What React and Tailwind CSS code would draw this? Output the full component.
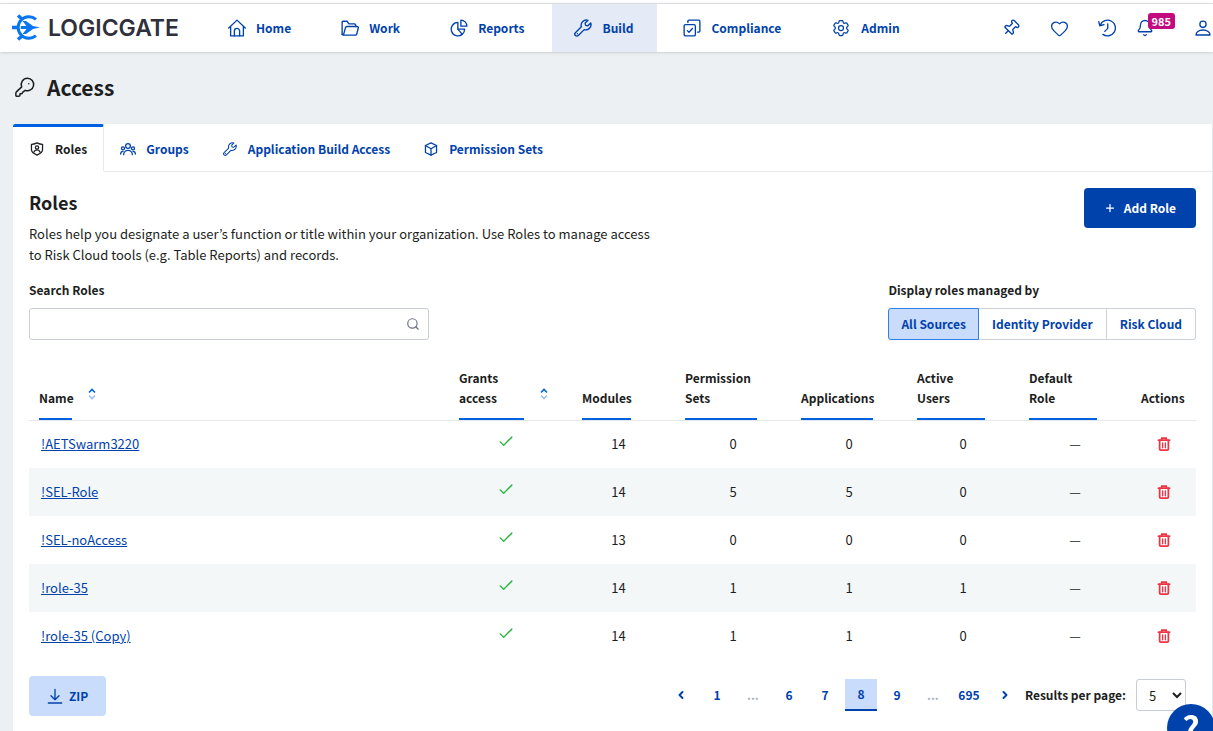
import React, { useState } from 'react';
import { Bell, Heart, Pin, Plus, Search, ChevronLeft, ChevronRight } from 'lucide-react';
import { HiOutlineCog6Tooth } from 'react-icons/hi2';

const Icon = ({ className, strokeWidth = 1.8, children }) => (
  <svg
    className={className}
    viewBox="0 0 24 24"
    fill="none"
    stroke="currentColor"
    strokeWidth={strokeWidth}
    strokeLinecap="round"
    strokeLinejoin="round"
    aria-hidden="true"
  >
    {children}
  </svg>
);

const HomeIcon = ({ className }) => (
  <Icon className={className}>
    <path d="M1 12 12 1.500 23 12M3.500 9.800V22.500H20.500V9.800" />
    <path d="M8.500 22.500V16a3.500 3.500 0 0 1 7 0v6.500" />
  </Icon>
);

const FolderIcon = ({ className }) => (
  <Icon className={className}>
    <path d="M1.500 20.500V4.500A1.500 1.500 0 0 1 3 3h5l2.500 3.500H18A1.500 1.500 0 0 1 19.500 8v2" />
    <path d="M1.500 20.500a1.500 1.500 0 0 0 1.200 1H19a2 2 0 0 0 2-1.500l2-8a1.500 1.500 0 0 0-1.500-2H8a2 2 0 0 0-2 1.500L3.500 20.500" />
  </Icon>
);

const PieIcon = ({ className }) => (
  <Icon className={className}>
    <path d="M10.500 4.500a9 9 0 1 0 5.800 16L10.500 13.500z" />
    <path d="M10.500 13.500h9a9 9 0 0 1-3.200 7" />
    <path d="M14.500 1.500v8h8a8 8 0 0 0-8-8z" />
  </Icon>
);

const WrenchIcon = ({ className }) => (
  <Icon className={className}>
    <path d="M22.300 5.200 18.500 9l-3-.6-.6-3 3.800-3.700a7 7 0 0 0-8.900 8.700L1.900 18.200a2.700 2.700 0 0 0 3.900 3.900l7.800-7.900a7 7 0 0 0 8.700-9z" />
    <path d="M4.500 19.500v.1" />
  </Icon>
);

const ComplianceIcon = ({ className }) => (
  <Icon className={className}>
    <rect x="1.500" y="7.500" width="15" height="15" rx="2" />
    <path d="M6.500 4.500V3a1.500 1.500 0 0 1 1.500-1.500h13A1.500 1.500 0 0 1 22.500 3v13a1.500 1.500 0 0 1-1.500 1.500h-1.500" />
    <path d="m5.800 15.500 2.200 2.200 4.500-5" />
  </Icon>
);

const HistoryIcon = ({ className }) => (
  <Icon className={className}>
    <path d="M6.500 20.500A10.500 10.500 0 1 0 3 8M1 3.500 2.500 9l5.500-1.500" />
    <path d="M13 6.500v6l-4 4" />
  </Icon>
);

const UserIcon = ({ className }) => (
  <Icon className={className} strokeWidth={2}>
    <circle cx="12" cy="6.500" r="4.700" />
    <path d="M1.500 22.500c0-4 4-7.500 10.500-7.500s10.500 3.500 10.500 7.500z" />
  </Icon>
);

const KeyIcon = ({ className }) => (
  <Icon className={className} strokeWidth={1.8}>
    <path d="M15 1.500a7.500 7.500 0 0 0-7 10.300L2 17.500c-.7.700-1 1.400-1 2.300V22a1 1 0 0 0 1 1h2.200c1 0 1.800-.5 1.800-1.500V20h1.500c1 0 1.500-.5 1.500-1.500L12.200 16A7.500 7.500 0 1 0 15 1.500z" />
    <path d="M16.500 8v.1" />
  </Icon>
);

const RoleIcon = ({ className }) => (
  <Icon className={className} strokeWidth={2.200}>
    <path d="M12 1.500c3 1.500 6 2.500 9.500 2.500v9c0 4.500-4.500 7.500-9.500 9.500-5-2-9.500-5-9.500-9.500V4C6 4 9 3 12 1.500z" />
    <circle cx="12" cy="9.500" r="2.800" />
    <path d="M6.500 17.500a5.800 5.800 0 0 1 11 0" />
  </Icon>
);

const GroupIcon = ({ className }) => (
  <Icon className={className} strokeWidth={2}>
    <circle cx="12" cy="7.500" r="3.500" />
    <path d="M5.500 20.500a6.500 6.500 0 0 1 13 0" />
    <circle cx="4.500" cy="11" r="2.300" />
    <circle cx="19.500" cy="11" r="2.300" />
    <path d="M1 19.500c0-2.500 1.500-4 3.500-4M23 19.500c0-2.500-1.500-4-3.500-4" />
  </Icon>
);

const BoxIcon = ({ className }) => (
  <Icon className={className} strokeWidth={2.200}>
    <path d="m12 1.500 9.500 4.500v12L12 22.500 2.500 18V6z" />
    <path d="M2.500 6 12 11.500 21.500 6M12 11.500v11" />
  </Icon>
);

const CheckIcon = ({ className }) => (
  <Icon className={className} strokeWidth={2.400}>
    <path d="m2 13.500 6 6L22 5" />
  </Icon>
);

const TrashIcon = ({ className }) => (
  <Icon className={className} strokeWidth={3}>
    <path d="M2.500 5.500h19M8 5V2h8v3" />
    <path d="M4.500 6v14.500a2 2 0 0 0 2 2h11a2 2 0 0 0 2-2V6" />
    <path d="M9.700 10v8.500M14.300 10v8.500" strokeWidth={2.200} />
  </Icon>
);

const DownloadIcon = ({ className }) => (
  <Icon className={className} strokeWidth={2}>
    <path d="M12 2v15M6 11.500l6 6 6-6M2 22.500h20" />
  </Icon>
);

const SortIcon = () => (
  <svg className="w-2 h-3 mb-5 shrink-0 text-[#0061e0]" viewBox="0 0 8 12" fill="none" stroke="currentColor" strokeWidth="1.600" aria-hidden="true">
    <path d="M1 4.500 4 1.500l3 3" />
    <path d="m1 7.500 3 3 3-3" opacity="0.400" />
  </svg>
);

const Logo = () => (
  <a href="#home" className="flex items-center gap-2 w-[195px] pl-3 shrink-0" aria-label="LogicGate">
    <svg className="size-7 shrink-0" viewBox="0 0 28 28" aria-hidden="true">
      <path d="M24 5.300A10.800 10.800 0 1 0 24 21.700" fill="none" stroke="#0a75f0" strokeWidth="3" />
      <path d="m6 1.500 4 3.500M6 25.500l4-3.500M0 13.500h5" fill="none" stroke="#0a75f0" strokeWidth="3.400" />
      <path d="M8.800 12h5.700L10.500 7h3.500l7 5 7 1.500-7 1.500-7 5h-3.500l4-5H8.800z" fill="#0a75f0" />
    </svg>
    <span className="font-[Inter] font-semibold text-[23px] leading-7 text-[#30303c]">LOGICGATE</span>
  </a>
);

const navItems = [
  { name: 'Home', icon: HomeIcon },
  { name: 'Work', icon: FolderIcon },
  { name: 'Reports', icon: PieIcon },
  { name: 'Build', icon: WrenchIcon, active: true },
  { name: 'Compliance', icon: ComplianceIcon },
  { name: 'Admin', icon: HiOutlineCog6Tooth, iconClass: 'size-5' },
];

const tabs = [
  { name: 'Roles', icon: RoleIcon, iconClass: 'size-4 p-px' },
  { name: 'Groups', icon: GroupIcon, iconClass: 'size-4' },
  { name: 'Application Build Access', icon: WrenchIcon, iconClass: 'size-4 p-px' },
  { name: 'Permission Sets', icon: BoxIcon, iconClass: 'size-4 p-px' },
];

const sources = ['All Sources', 'Identity Provider', 'Risk Cloud'];

const roles = [
  { id: 1, name: '!AETSwarm3220', modules: 14, permissionSets: 0, applications: 0, activeUsers: 0 },
  { id: 2, name: '!SEL-Role', modules: 14, permissionSets: 5, applications: 5, activeUsers: 0 },
  { id: 3, name: '!SEL-noAccess', modules: 13, permissionSets: 0, applications: 0, activeUsers: 0 },
  { id: 4, name: '!role-35', modules: 14, permissionSets: 1, applications: 1, activeUsers: 1 },
  { id: 5, name: '!role-35 (Copy)', modules: 14, permissionSets: 1, applications: 1, activeUsers: 0 },
];

const columns = [
  { name: 'Modules', padding: 'pr-11' },
  { name: 'Permission Sets', padding: 'pr-[34px]' },
  { name: 'Applications', padding: 'pr-[34px]' },
  { name: 'Active Users', padding: 'pr-[34px]' },
  { name: 'Default Role', padding: 'pr-[34px]' },
];

const pages = ['1', '...', '6', '7', '8', '9', '...', '695'];

const Header = () => (
  <header className="flex items-stretch h-[52px] pt-[3px] bg-white">
    <div className="flex flex-1 items-stretch border-t border-[#d9dbde] shadow-sm">
      <Logo />
      <nav className="flex gap-1 pl-[11px] text-xs">
        {navItems.map(({ name, icon: NavIcon, iconClass, active }) => (
          <a
            key={name}
            href={`#${name.toLowerCase()}`}
            className={`flex items-center gap-[10px] pl-[22px] pr-6 font-bold text-[#0042ab] ${active ? 'bg-[#e4eaf6]' : ''}`}
          >
            <NavIcon className={iconClass || 'size-[18px]'} />
            {name}
          </a>
        ))}
      </nav>
      <div className="flex items-center ml-auto pr-[2px] text-[#0042ab]">
        <div className="flex gap-7">
          <button aria-label="Pinned" className="flex size-5 items-center justify-center">
            <Pin className="size-[18px] rotate-45" strokeWidth={1.800} />
          </button>
          <button aria-label="Favorites" className="flex size-5 items-center justify-center">
            <Heart className="size-[19px]" strokeWidth={1.600} />
          </button>
          <button aria-label="History" className="flex size-5 items-center justify-center">
            <HistoryIcon className="size-[18px]" />
          </button>
        </div>
        <button aria-label="Notifications" className="relative ml-[19px] w-[39px]">
          <Bell className="size-[18px]" strokeWidth={1.800} />
          <span className="absolute right-0 -top-[6px] h-4 px-1 rounded-[3px] bg-[#c20b7e] text-white text-[11px] leading-4 font-bold">985</span>
        </button>
        <button aria-label="Account" className="ml-5"><UserIcon className="size-4" /></button>
      </div>
    </div>
  </header>
);

const RolesTable = () => (
  <table className="w-full mt-4 table-fixed">
    <colgroup>
      <col />
      <col className="w-[123px]" />
      <col className="w-[103px]" />
      <col className="w-[116px]" />
      <col className="w-[116px]" />
      <col className="w-[112px]" />
      <col className="w-[112px]" />
      <col className="w-[65px]" />
    </colgroup>
    <thead className="text-xs leading-5">
      <tr className="h-16 border-b border-[#e6e9eb] text-left">
        <th className="pl-[10px] align-bottom">
          <div className="flex items-end gap-4">
            <span className="w-[33px] pb-[10px] border-b-2 border-[#0061e0]">Name</span>
            <SortIcon />
          </div>
        </th>
        <th className="pl-[10px] align-bottom">
          <div className="flex items-end gap-4">
            <span className="w-[65px] pb-[10px] border-b-2 border-[#0061e0]">Grants access</span>
            <SortIcon />
          </div>
        </th>
        {columns.map((column) => (
          <th key={column.name} className={`pl-[10px] align-bottom ${column.padding}`}>
            <div className="pb-[10px] border-b-2 border-[#0061e0]">{column.name}</div>
          </th>
        ))}
        <th className="pl-[10px] pb-3 align-bottom">Actions</th>
      </tr>
    </thead>
    <tbody>
      {roles.map((role) => (
        <tr key={role.id} className="h-12 text-center even:bg-[#f3f7f8]">
          <td className="pl-3 text-left">
            <a href={`#role-${role.id}`} className="text-[#0042ab] underline">{role.name}</a>
          </td>
          <td className="pr-[10px] pb-[6px]">
            <CheckIcon className="size-[14px] mx-auto text-[#22b33a]" />
          </td>
          <td className="pr-[10px]">{role.modules}</td>
          <td>{role.permissionSets}</td>
          <td>{role.applications}</td>
          <td>{role.activeUsers}</td>
          <td>—</td>
          <td>
            <button aria-label={`Delete ${role.name}`} className="block mx-auto">
              <TrashIcon className="size-[14px] text-[#ee3344]" />
            </button>
          </td>
        </tr>
      ))}
    </tbody>
  </table>
);

const Pagination = ({ page, setPage }) => (
  <nav aria-label="Pagination" className="flex items-center gap-1 font-bold text-[#0042ab]">
    <button aria-label="Previous page" className="flex size-8 items-center justify-center">
      <ChevronLeft className="size-3" strokeWidth={4} />
    </button>
    {pages.map((p, index) =>
      p === '...' ? (
        <span key={index} className="w-8 text-center text-[#a6b1bb]">...</span>
      ) : (
        <button
          key={index}
          onClick={() => setPage(p)}
          className={`size-8 text-center ${page === p ? 'bg-[#c9dcfc] border-b-2 border-[#0042ab]' : ''}`}
        >
          {p}
        </button>
      )
    )}
    <button aria-label="Next page" className="flex size-8 items-center justify-center">
      <ChevronRight className="size-3" strokeWidth={4} />
    </button>
  </nav>
);

const App = () => {
  const [tab, setTab] = useState('Roles');
  const [source, setSource] = useState('All Sources');
  const [page, setPage] = useState('8');
  const [search, setSearch] = useState('');

  return (
    <div className="flex flex-col min-h-screen overflow-hidden bg-[#ecf0f3] font-['Noto_Sans_CJK_JP',sans-serif] text-[13px] leading-5 text-[#1c1e21]">
      <Header />

      <h1 className="flex items-center gap-3 h-[72px] pl-[15px] pb-[2px] text-[21px] font-bold">
        <KeyIcon className="size-5" />
        Access
      </h1>

      <main className="flex-1 ml-[13px] bg-white border-r border-[#e6e9eb]">
        <div role="tablist" className="flex h-12 text-xs">
          {tabs.map(({ name, icon: TabIcon, iconClass }) => (
            <button
              key={name}
              role="tab"
              aria-selected={tab === name}
              onClick={() => setTab(name)}
              className={`flex items-center gap-[10px] pl-4 font-bold border-t-3 border-b ${
                tab === name
                  ? 'pr-4 border-t-[#0061e0] border-b-white border-r border-r-[#e6e9eb] rounded-t-[2px]'
                  : 'pr-[17px] border-t-transparent border-b-[#e6e9eb] text-[#0042ab]'
              }`}
            >
              <TabIcon className={iconClass} />
              {name}
            </button>
          ))}
          <div className="flex-1 border-b border-[#e6e9eb]" />
        </div>

        <div className="px-4 pt-4">
          <div className="flex items-start justify-between">
            <div className="max-w-[630px]">
              <h2 className="text-lg leading-7 font-bold">Roles</h2>
              <p className="mt-[7px] leading-[21px]">
                Roles help you designate a user’s function or title within your organization. Use Roles to manage access to Risk Cloud tools (e.g. Table Reports) and records.
              </p>
            </div>
            <button className="flex items-center gap-2 h-10 px-5 rounded bg-[#0042ab] text-white text-xs font-bold">
              <Plus className="size-3" strokeWidth={2.500} />
              Add Role
            </button>
          </div>

          <div className="flex items-end justify-between mt-[15px]">
            <div className="w-[400px]">
              <label htmlFor="search" className="block text-xs leading-5 font-bold">Search Roles</label>
              <div className="flex items-center h-8 mt-2 pr-2 border border-[#c9ced6] rounded-[3px]">
                <input
                  id="search"
                  type="text"
                  value={search}
                  onChange={(e) => setSearch(e.target.value)}
                  className="flex-1 h-full px-2 outline-none"
                />
                <Search className="size-[14px] text-[#6b7280]" strokeWidth={2} />
              </div>
            </div>
            <div className="text-xs leading-5 font-bold">
              <p>Display roles managed by</p>
              <div className="flex mt-2">
                {sources.map((name) => (
                  <button
                    key={name}
                    onClick={() => setSource(name)}
                    className={`h-8 px-[13px] border text-[#0042ab] first:px-3 first:rounded-l-[3px] last:rounded-r-[3px] ${
                      source === name ? 'bg-[#c9dcfc] border-[#2f7de8]' : 'border-[#cdd3d8] border-l-0'
                    }`}
                  >
                    {name}
                  </button>
                ))}
              </div>
            </div>
          </div>

          <RolesTable />

          <div className="flex items-center justify-between mt-4 mb-3 text-xs">
            <button className="flex items-center gap-[6px] h-10 px-[18px] rounded bg-[#c9dcfc] text-[#0042ab] font-bold">
              <DownloadIcon className="size-4" />
              ZIP
            </button>
            <div className="flex items-center pr-[10px] pb-[2px]">
              <Pagination page={page} setPage={setPage} />
              <label htmlFor="perPage" className="ml-1 mr-[10px] font-bold">Results per page:</label>
              <select id="perPage" defaultValue="5" className="w-[50px] h-8 pl-2 border border-[#c9ced6] rounded-[3px] bg-white text-[13px]">
                <option>5</option>
                <option>10</option>
                <option>25</option>
              </select>
            </div>
          </div>
        </div>
      </main>

      <button
        aria-label="Help"
        className="fixed -right-[2px] -bottom-[21px] size-12 rounded-full bg-[#0042ab] text-white text-[34px] leading-[44px] font-bold shadow-lg"
      >
        ?
      </button>
    </div>
  );
};

export default App;
